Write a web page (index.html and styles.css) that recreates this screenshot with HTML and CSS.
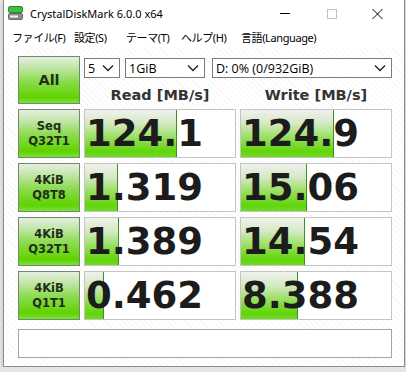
FILE: index.html
```html
<!DOCTYPE html>
<html>
    <head>
        <meta charset="utf-8">
        <title>CrystalDiskMark 6.0.0 x64</title>
        <link rel="stylesheet" href="styles.css">
    </head>
    <body>
        <div class="window">
            <div class="titlebar">
                <svg class="app-icon" width="15" height="14" viewBox="0 0 15 14">
                    <rect x="0.5" y="0.5" width="14" height="6" rx="1.5" fill="#3fbf3f" stroke="#2a8a2a"/>
                    <rect x="0.5" y="7.5" width="14" height="6" rx="1" fill="#8c8c8c" stroke="#6a6a6a"/>
                    <rect x="2" y="9.5" width="8" height="2" fill="#f2f2f2"/>
                </svg>
                <div class="title">CrystalDiskMark 6.0.0 x64</div>
                <div class="controls">
                    <svg width="46" height="26" viewBox="0 0 46 26"><line x1="17" y1="13.5" x2="27" y2="13.5" stroke="#000" stroke-width="1"/></svg>
                    <svg width="46" height="26" viewBox="0 0 46 26"><rect x="18.5" y="9.5" width="9" height="9" fill="none" stroke="#c4c4c4"/></svg>
                    <svg width="46" height="26" viewBox="0 0 46 26"><path d="M17.5 9 L27.5 19 M27.5 9 L17.5 19" stroke="#000" stroke-width="1"/></svg>
                </div>
            </div>
            <div class="menubar">
                <span class="menu-item">ファイル(F)</span>
                <span class="menu-item">設定(S)</span>
                <span class="menu-item">テーマ(T)</span>
                <span class="menu-item">ヘルプ(H)</span>
                <span class="menu-item">言語(Language)</span>
            </div>
            <div class="client">
                <div class="grid">
                    <div class="btn btn-all">All</div>
                    <div class="head">
                        <div class="selects">
                            <div class="combo combo-count">5<svg class="chev" width="12" height="8" viewBox="0 0 12 8"><path d="M1 1.5 L6 6.5 L11 1.5" fill="none" stroke="#222" stroke-width="1.4"/></svg></div>
                            <div class="combo combo-size">1GiB<svg class="chev" width="12" height="8" viewBox="0 0 12 8"><path d="M1 1.5 L6 6.5 L11 1.5" fill="none" stroke="#222" stroke-width="1.4"/></svg></div>
                            <div class="combo combo-drive">D: 0% (0/932GiB)<svg class="chev" width="12" height="8" viewBox="0 0 12 8"><path d="M1 1.5 L6 6.5 L11 1.5" fill="none" stroke="#222" stroke-width="1.4"/></svg></div>
                        </div>
                        <div class="labels">
                            <span>Read [MB/s]</span>
                            <span>Write [MB/s]</span>
                        </div>
                    </div>

                    <div class="btn btn-test">Seq<br>Q32T1</div>
                    <div class="cell"><div class="bar" style="width:92px"></div><span class="value">124.1</span></div>
                    <div class="cell"><div class="bar" style="width:93px"></div><span class="value">124.9</span></div>

                    <div class="btn btn-test">4KiB<br>Q8T8</div>
                    <div class="cell"><div class="bar" style="width:33px"></div><span class="value">1.319</span></div>
                    <div class="cell"><div class="bar" style="width:66px"></div><span class="value">15.06</span></div>

                    <div class="btn btn-test">4KiB<br>Q32T1</div>
                    <div class="cell"><div class="bar" style="width:34px"></div><span class="value">1.389</span></div>
                    <div class="cell"><div class="bar" style="width:64px"></div><span class="value">14.54</span></div>

                    <div class="btn btn-test">4KiB<br>Q1T1</div>
                    <div class="cell"><div class="bar" style="width:19px"></div><span class="value">0.462</span></div>
                    <div class="cell"><div class="bar" style="width:57px"></div><span class="value">8.388</span></div>
                </div>
                <div class="comment"></div>
            </div>
        </div>
    </body>
</html>
```
FILE: styles.css
```css
body {
    margin: 0;
    background-color: #e6e6e6;
    font-family: "Noto Sans", "Noto Sans CJK JP", sans-serif;
}

div.window {
    width: 400px;
    margin-left: 3px;
    border: 1px solid #8c8c8c;
    border-top: none;
    background-color: #ffffff;
    box-shadow: 0 2px 4px rgba(0, 0, 0, 0.2);
}

div.titlebar {
    height: 26px;
    display: flex;
    align-items: center;
    background-color: #ffffff;
}
svg.app-icon {
    margin-left: 4px;
    margin-top: -1px;
}
div.title {
    margin-left: 7px;
    font-size: 11px;
    color: #000;
    flex: 1;
}
div.controls {
    display: flex;
    margin-right: 3px;
}
div.controls svg {
    display: block;
}

div.menubar {
    height: 22px;
    display: grid;
    grid-template-columns: 62px 52px 55px 60px auto;
    align-items: center;
    padding-left: 8px;
    font-family: "Noto Sans", "Noto Sans CJK JP", sans-serif;
    font-size: 11px;
    color: #000;
    background-color: #ffffff;
}
span.menu-item {
    white-space: nowrap;
    letter-spacing: -0.4px;
}

div.client {
    padding: 8px 0 8px 14px;
    background-color: #ffffff;
    background-image: repeating-linear-gradient(45deg, #ffffff 0 3px, #f7f7f7 3px 4px);
}

div.grid {
    display: grid;
    grid-template-columns: 62px 152px 152px;
    grid-template-rows: 48px repeat(4, 49px);
    column-gap: 4px;
    row-gap: 5px;
}

div.btn {
    box-sizing: border-box;
    border: 1px solid #75876e;
    background: linear-gradient(to bottom, #e4efde 0%, #c4e6ac 22%, #8fdc55 50%, #5fd300 88%, #7ae23a 100%);
    display: flex;
    align-items: center;
    justify-content: center;
    text-align: center;
    font-family: "DejaVu Sans", sans-serif;
    font-weight: bold;
    color: #1f2f18;
}
div.btn-all {
    font-size: 14.5px;
}
div.btn-test {
    font-size: 11.5px;
    line-height: 15px;
}

div.head {
    grid-column: 2 / 4;
    display: flex;
    flex-direction: column;
}
div.selects {
    display: flex;
    margin-top: 2px;
    height: 20px;
}
div.combo {
    box-sizing: border-box;
    height: 20px;
    border: 1px solid #7a7a7a;
    background-color: #ffffff;
    display: flex;
    align-items: center;
    justify-content: space-between;
    padding: 0 5px 0 3px;
    font-family: "Open Sans", sans-serif;
    font-size: 12.5px;
    color: #000;
    white-space: nowrap;
}
div.combo-count {
    width: 36px;
}
div.combo-size {
    width: 80px;
    margin-left: 5px;
}
div.combo-drive {
    width: 180px;
    margin-left: 7px;
}

div.labels {
    display: grid;
    grid-template-columns: 152px 152px;
    column-gap: 4px;
    margin-top: 8px;
    line-height: 18px;
    font-family: "DejaVu Sans", sans-serif;
    font-weight: bold;
    font-size: 14.5px;
    color: #333333;
    text-align: center;
    white-space: nowrap;
}

div.cell {
    position: relative;
    box-sizing: border-box;
    border: 1px solid #c4c4c4;
    background-color: #ffffff;
    overflow: hidden;
}
div.bar {
    position: absolute;
    left: 0;
    top: 0;
    bottom: 0;
    box-sizing: border-box;
    border-right: 1px solid #3d8f22;
    background: linear-gradient(to bottom, #f0f1ed 0%, #d6e9c6 28%, #9adf62 58%, #62d40c 88%, #6fdc22 100%);
}
span.value {
    position: relative;
    display: block;
    padding-left: 1px;
    line-height: 47px;
    font-family: "DejaVu Sans", sans-serif;
    font-weight: bold;
    font-size: 37px;
    color: #1c1c1c;
    white-space: nowrap;
}

div.comment {
    box-sizing: border-box;
    width: 374px;
    height: 29px;
    margin-top: 9px;
    border: 1px solid #a4a4a4;
    background-color: #ffffff;
}
```
